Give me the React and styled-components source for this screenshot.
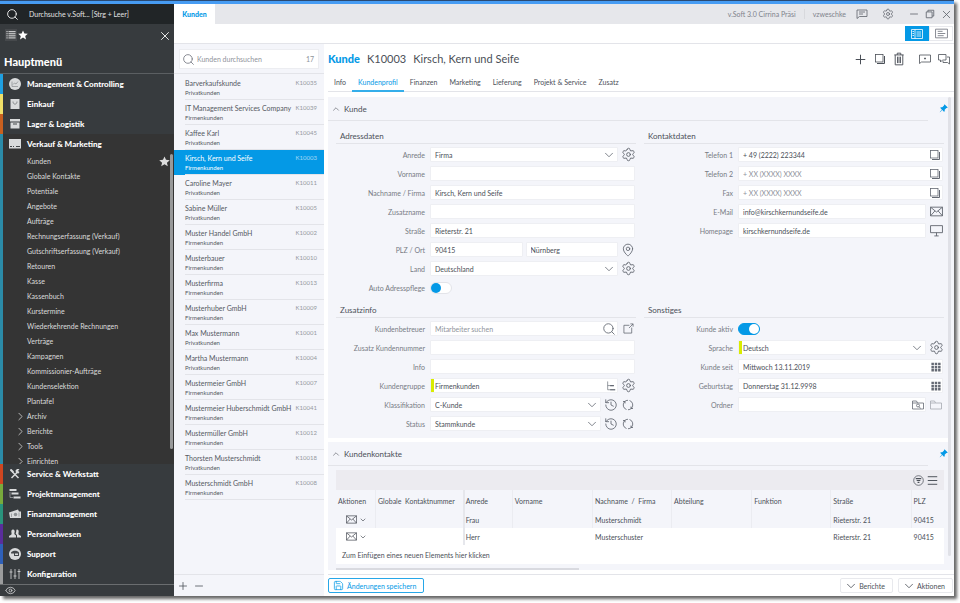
import { useState } from 'react';
import styled, { createGlobalStyle } from 'styled-components';
import {
  Search,
  X,
  ChevronRight,
  ChevronDown,
  ChevronUp,
  Eye,
  Plus,
  Minus,
  Settings,
  MapPin,
  History,
  Menu,
  Save,
} from 'lucide-react';
import { BsPinAngleFill } from 'react-icons/bs';

const blue = '#0499e6';
const ink = '#4b5058';
const muted = '#777b84';
const panel = '#f4f5fa';
const line = '#e3e4e9';

const GlobalStyle = createGlobalStyle`
  * {
    box-sizing: border-box;
  }
  html, body, #root {
    height: 100%;
    margin: 0;
  }
  body {
    background: white;
    color: ${ink};
    font-family: Lato, 'Open Sans', sans-serif;
    font-size: 7px;
    line-height: 10px;
    overflow: hidden;
  }
  button, input, select {
    font: inherit;
    color: inherit;
    margin: 0;
    padding: 0;
    border: 0;
    border-radius: 0;
    background: transparent;
  }
  button {
    cursor: pointer;
  }
  h1, h2, h3, ul {
    margin: 0;
    padding: 0;
    font-weight: 400;
    list-style: none;
  }
  a {
    color: inherit;
    text-decoration: none;
  }
  svg {
    display: block;
    flex: none;
  }
`;

/* ---------- icons ---------- */

const Line = ({ size = 12, children }) => (
  <svg
    width={size}
    height={size}
    viewBox="0 0 24 24"
    fill="none"
    stroke="currentColor"
    strokeWidth="1.6">
    {children}
  </svg>
);

const Solid = ({ size = 12, children }) => (
  <svg width={size} height={size} viewBox="0 0 24 24" fill="currentColor">
    {children}
  </svg>
);

const StarIcon = ({ size = 10 }) => (
  <Solid size={size}>
    <path d="M12 1l3.3 7.4 8.2.8-6.2 5.3 1.9 8L12 18.2 4.8 22.5l1.9-8L.5 9.200l8.200-.8z" />
  </Solid>
);
const ListIcon = () => (
  <Line size={10}>
    <path d="M1 4h3M6 4h17M1 9h3M6 9h17M1 14h3M6 14h17M1 19h3M6 19h17" strokeWidth="2" />
  </Line>
);
const CopyIcon = ({ size }) => (
  <Line size={size}>
    <rect x="3" y="3" width="15" height="15" />
    <path d="M21 6v15H6" strokeWidth="2" />
  </Line>
);
const TrashIcon = () => (
  <Line size={14}>
    <path d="M4 5h16M9 5V2h6v3M5.500 5v17h13V5M9.500 8v11M12 8v11M14.500 8v11" />
  </Line>
);
const NoteIcon = () => (
  <Line>
    <path d="M1 21V4h22v14H5z" />
    <path d="M10 11h4M12 9v4" />
  </Line>
);
const TalkIcon = () => (
  <Line>
    <path d="M5 14H1V3h15v11H9l-4 4z" />
    <path d="M18 8h5v14l-4-3h-9v-3" />
  </Line>
);
const FeedbackIcon = () => (
  <Line>
    <path d="M2 21V4h20v13H7zM6 8h12M6 12h8" />
  </Line>
);
const SplitViewIcon = () => (
  <Line>
    <path d="M1 3h22v18H1zM8 3v18M3 7h3M3 11h3M3 15h3M11 8h9M11 12h9M11 16h9" />
  </Line>
);
const TextViewIcon = () => (
  <Line size={13}>
    <path d="M1 4h22v16H1zM5 8h9M5 12h14M5 16h11" />
  </Line>
);
const RestoreIcon = () => (
  <Line size={10}>
    <path d="M3 7h14v14H3zM7 7V3h14v14h-4" strokeWidth="2" />
  </Line>
);
const MailIcon = ({ size = 13 }) => (
  <Line size={size}>
    <path d="M1 4h22v16H1zM1 4l11 9 11-9M1 20l8-9M23 20l-8-9" />
  </Line>
);
const ScreenIcon = () => (
  <Line size={13}>
    <path d="M1 3h22v13H1zM12 16v6M8 22h8" />
  </Line>
);
const PopOutIcon = () => (
  <Line size={11}>
    <path d="M14 5H2v17h17V10M13 11l9-9M16 2h6v6" />
  </Line>
);
const TreeIcon = () => (
  <Line size={10}>
    <path d="M4 1v20h18M4 11h14" />
    <path d="M10 11h9M10 21h12" strokeWidth="2.600" />
  </Line>
);
const CycleIcon = () => (
  <Line>
    <path d="M9 21A9.500 9.500 0 0 1 5 5.500M15 3a9.500 9.500 0 0 1 4 15.500M2 5h4v4M22 19h-4v-4M5 5.500A9.500 9.500 0 0 1 12 2.500M19 18.500a9.500 9.500 0 0 1-7 3" />
  </Line>
);
const GridIcon = () => (
  <Solid size={10}>
    <path d="M1 2h6v6H1zM9 2h6v6H9zM17 2h6v6h-6zM1 9.500h6v6H1zM9 9.500h6v6H9zM17 9.500h6v6h-6zM1 17h6v6H1zM9 17h6v6H9zM17 17h6v6h-6z" />
  </Solid>
);
const FolderIcon = () => (
  <Line>
    <path d="M1 20V4h8l2 4h12v12zM1 8h10" />
  </Line>
);
const FolderSearchIcon = () => (
  <Line>
    <path d="M1 20V4h8l2 4h12v12zM1 8h10" />
    <circle cx="12" cy="13" r="3" />
    <path d="M14 15l3 4" />
  </Line>
);
const FilterIcon = () => (
  <Line size={11}>
    <circle cx="12" cy="12" r="10.500" />
    <path d="M6 8h12M8 12h8M10 16h4" strokeWidth="2.400" />
  </Line>
);

const menuIcons = {
  chart: (
    <Solid>
      <path d="M12 0a12 12 0 1 1 0 24 12 12 0 0 1 0-24z" />
      <path d="M6 7v10h12M8 13l3-3 3 2 4-5" fill="none" stroke="#8c9093" strokeWidth="1.500" />
    </Solid>
  ),
  bag: (
    <Solid>
      <path d="M3 2h18v20H3z" />
      <path d="M8 7c0 7 8 7 8 0" fill="none" stroke="#6b6f72" strokeWidth="1.500" />
    </Solid>
  ),
  box: (
    <Solid>
      <path d="M2 2h20v5H2zM3 9h18v12H3z" />
      <path d="M8 12h8" stroke="#44484b" strokeWidth="2" />
    </Solid>
  ),
  card: (
    <Solid>
      <path d="M0 2h24v19H0z" />
      <path d="M2 17h4M8 17h2M14 17h8" stroke="#44484b" strokeWidth="2" />
    </Solid>
  ),
  tools: (
    <Solid>
      <path d="M5 20L18 7M19 20L7 8" fill="none" stroke="currentColor" strokeWidth="3" />
      <path d="M2 3l3-1 5 5-3 3-5-5zM16 2l5 0-3 4 3 2-2 3-5-1-1-5z" />
    </Solid>
  ),
  gantt: (
    <Solid>
      <path d="M1 2h14v4H1zM5 9h14v4H5zM9 17h14v4H9z" />
      <path d="M2 8v11h6" fill="none" stroke="currentColor" strokeWidth="1" />
    </Solid>
  ),
  money: (
    <Solid>
      <path d="M0 9l18-6 2 4h4v13H2z" />
      <circle cx="13" cy="13" r="3.500" fill="#8c9093" />
      <path d="M5 11v7M20 9v8" stroke="#8c9093" strokeWidth="1.500" />
    </Solid>
  ),
  people: (
    <Solid>
      <path d="M8 3c3 0 4 3 3 6-1 3 0 4 3 6v4H0v-3c4-2 6-3 5-6-1-4 0-7 3-7z" />
      <path d="M16 3c3 0 4 3 3 7-1 3 1 4 5 6v3h-8v-5c-3-2-3-3-2-5 1-3 0-6 2-6z" />
    </Solid>
  ),
  support: (
    <Solid>
      <path d="M12 0a12 12 0 1 1 0 24 12 12 0 0 1 0-24z" />
      <path d="M4 9c3-5 13-5 16 0v7H10v-5H4z" fill="#44484b" />
      <path d="M12 11h6v3h-6z" />
    </Solid>
  ),
  sliders: (
    <Line>
      <path d="M4 2v20M12 2v20M20 2v20M1 8h6M9 16h6M17 7h6" />
    </Line>
  ),
};

/* ---------- window frame ---------- */

const Desktop = styled.div`
  height: 100%;
  padding: 0 6px 7px 0;
`;

const Window = styled.div`
  height: 100%;
  display: flex;
  flex-direction: column;
  background: white;
  border-top: 1px solid #2a4a73;
  box-shadow: 3px 3px 3px rgba(0, 0, 0, 0.6);
`;

const Accent = styled.div`
  flex: none;
  height: 3px;
  background: #479cf3;
`;

const Columns = styled.div`
  flex: 1;
  min-height: 0;
  display: flex;
`;

/* ---------- sidebar ---------- */

const Sidebar = styled.nav`
  flex: none;
  width: 174px;
  display: flex;
  flex-direction: column;
  background: #373b3e;
  color: white;
`;

const SideSearch = styled.label`
  flex: none;
  height: 20px;
  display: flex;
  align-items: center;
  gap: 10px;
  padding-left: 6px;
  background: #212527;
  input {
    flex: 1;
    min-width: 0;
  }
  input::placeholder {
    color: #e4e4e4;
    opacity: 1;
  }
`;

const SideTools = styled.div`
  flex: none;
  height: 22px;
  display: flex;
  align-items: center;
  padding: 0 4px 0 5px;
`;

const SideTool = styled.button`
  width: 12px;
  height: 12px;
  display: grid;
  place-items: center;
  background: ${(p) => (p.$active ? '#46494c' : 'transparent')};
  margin-left: ${(p) => (p.$end ? 'auto' : '0')};
`;

const SideTitle = styled.h2`
  flex: none;
  height: 28px;
  padding: 8px 4px 0;
  font-size: 11px;
  line-height: 16px;
  font-weight: 900;
  border-bottom: 1px solid #5b5f62;
`;

const Group = styled.div`
  flex: ${(p) => (p.$open ? '1' : 'none')};
  min-height: 0;
  display: flex;
  flex-direction: column;
  border-left: 3px solid ${(p) => p.$color};
  background: ${(p) => (p.$open ? '#343434' : 'transparent')};
`;

const GroupHead = styled.button`
  flex: none;
  height: 20px;
  display: flex;
  align-items: center;
  gap: 6px;
  padding-left: 6px;
  font-size: 8px;
  font-weight: 900;
  text-align: left;
  svg {
    color: #d9dbdc;
  }
`;

const SubArea = styled.div`
  flex: 1;
  min-height: 0;
  display: flex;
`;

const SubList = styled.ul`
  flex: 1;
  overflow: hidden;
`;

const SubItem = styled.li`
  height: 15px;
  display: flex;
  align-items: center;
  padding-bottom: 1px;
  line-height: 8px;
  color: #dcdcdc;
  a {
    flex: 1;
  }
`;

const SubLead = styled.span`
  width: 24px;
  padding-left: 11px;
`;

const SubScroll = styled.div`
  width: 3px;
  height: 95%;
  margin-right: 1px;
  border-radius: 2px;
  background: #98999a;
`;

const SideFoot = styled.div`
  flex: none;
  height: 12px;
  display: flex;
  align-items: center;
  padding-left: 5px;
  border-top: 1px solid #6a6d6f;
  color: #cfd0d1;
`;

/* ---------- top bars ---------- */

const Workspace = styled.div`
  flex: 1;
  min-width: 0;
  display: flex;
  flex-direction: column;
`;

const TabBar = styled.div`
  flex: none;
  height: 20px;
  display: flex;
  align-items: center;
  background: #e6e7eb;
  color: #7f838b;
`;

const OpenTab = styled.button`
  align-self: stretch;
  width: 41px;
  margin-right: auto;
  background: white;
  color: ${blue};
  font-weight: 900;
`;

const BarText = styled.span`
  padding: 0 8px;
  border-left: ${(p) => (p.$divided ? '1px solid #d8d9dd' : '0')};
`;

const WindowButton = styled.button`
  width: 16px;
  display: grid;
  place-items: center;
  color: #5d626a;
  margin-left: ${(p) => (p.$apart ? '10px' : '0')};
`;

const ViewBar = styled.div`
  flex: none;
  height: 20px;
  display: flex;
  align-items: center;
  justify-content: flex-end;
  padding-right: 1px;
  border-bottom: 1px solid ${line};
`;

const ViewButton = styled.button`
  width: 24px;
  height: 15px;
  display: grid;
  place-items: center;
  border: 1px solid ${(p) => (p.$active ? blue : '#e8e9ed')};
  background: ${(p) => (p.$active ? blue : 'white')};
  color: ${(p) => (p.$active ? 'white' : muted)};
`;

const Body = styled.div`
  flex: 1;
  min-height: 0;
  display: flex;
`;

/* ---------- customer list ---------- */

const ListPanel = styled.aside`
  flex: none;
  width: 150px;
  display: flex;
  flex-direction: column;
  background: ${panel};
`;

const ListSearch = styled.label`
  flex: none;
  height: 20px;
  margin: 5px 5px 4px;
  padding: 0 4px 0 2px;
  display: flex;
  align-items: center;
  gap: 2px;
  background: white;
  border: 1px solid #ecedf1;
  color: #8f939b;
  svg {
    color: ${muted};
  }
  input {
    flex: 1;
    min-width: 0;
  }
  input::placeholder {
    color: #8f939b;
    opacity: 1;
  }
`;

const Customers = styled.ul`
  flex: 1;
  min-height: 0;
  overflow: hidden;
  padding-top: 1px;
  border-top: 1px solid ${line};
`;

const Customer = styled.li`
  padding-left: 11px;
  background: ${(p) => (p.$selected ? blue : 'transparent')};
  color: ${(p) => (p.$selected ? 'white' : '#555962')};
`;

const CustomerLink = styled.a`
  height: 25px;
  display: grid;
  grid-template-columns: 1fr auto;
  align-content: center;
  padding: 2px 7px 0 0;
  border-bottom: 1px solid ${line};
`;

const CustomerName = styled.span`
  font-size: ${(p) => (p.$small ? '6px' : '7px')};
  line-height: 9px;
  white-space: nowrap;
`;

const CustomerNo = styled.span`
  font-size: 6px;
  line-height: 8px;
  opacity: 0.6;
`;

const ListFoot = styled.div`
  flex: none;
  height: 22px;
  display: flex;
  align-items: center;
  gap: 4px;
  padding-left: 3px;
  border-top: 1px solid ${line};
`;

/* ---------- record ---------- */

const Record = styled.main`
  flex: 1;
  min-width: 0;
  display: flex;
  flex-direction: column;
  padding-left: 4px;
`;

const RecordHead = styled.header`
  flex: none;
  height: 30px;
  display: flex;
  align-items: center;
  padding-right: 1px;
`;

const RecordTitle = styled.h1`
  flex: 1;
  display: flex;
  gap: 7px;
  font-size: 11px;
  line-height: 16px;
  b {
    color: ${blue};
    font-weight: 900;
  }
`;

const HeadTool = styled.button`
  width: 19px;
  display: grid;
  place-items: center;
  margin-left: ${(p) => (p.$apart ? '7px' : '0')};
`;

const Tabs = styled.div`
  flex: none;
  height: 18px;
  display: flex;
  border-bottom: 1px solid ${line};
`;

const Tab = styled.button`
  padding: 0 6px;
  height: 18px;
  color: ${(p) => (p.$active ? blue : ink)};
  border-bottom: 2px solid ${(p) => (p.$active ? '#35aeea' : 'transparent')};
`;

const ScrollArea = styled.div`
  flex: 1;
  min-height: 0;
  display: flex;
  margin: 5px 0 4px;
`;

const Cards = styled.div`
  flex: 1;
  min-width: 0;
  display: flex;
  flex-direction: column;
  gap: 4px;
`;

const ScrollTrack = styled.div`
  flex: none;
  width: 6px;
  background: ${panel};
`;

const ScrollThumb = styled.div`
  width: 3px;
  height: 97%;
  border-radius: 2px;
  background: #e0e1e7;
`;

const Card = styled.section`
  flex: ${(p) => (p.$grow ? '1' : 'none')};
  background: ${panel};
  padding-bottom: ${(p) => (p.$grow ? '0' : '5px')};
`;

const CardHead = styled.header`
  height: 24px;
  display: flex;
  justify-content: space-between;
  color: ${blue};
`;

const CardTitle = styled.button`
  flex: 1;
  display: flex;
  align-items: center;
  gap: 3px;
  padding-left: 3px;
  margin-right: 11px;
  font-size: 8px;
  color: ${ink};
  border-bottom: 1px solid ${line};
`;

const PinButton = styled.button`
  align-self: flex-start;
  padding-top: 7px;
`;

const Forms = styled.div`
  display: grid;
  grid-template-columns: 1fr 1fr;
  column-gap: 8px;
  row-gap: 6px;
  padding: 8px 4px 0 8px;
`;

const FormTitle = styled.h3`
  height: 15px;
  padding-left: 4px;
  margin-bottom: 1px;
  font-size: 8px;
  line-height: 14px;
  border-bottom: 1px solid ${line};
`;

const FieldRow = styled.div`
  height: 19px;
  display: flex;
  align-items: center;
  gap: 3px;
  padding-right: 1px;
`;

const FieldLabel = styled.label`
  flex: none;
  width: 91px;
  padding-right: 2px;
  text-align: right;
  color: ${muted};
`;

const Box = styled.div`
  flex: 1;
  min-width: 0;
  height: 15px;
  display: flex;
  align-items: center;
  padding-right: 1px;
  background: white;
  border: 1px solid #eeeff3;
  border-radius: 1px;
  svg {
    color: #646973;
  }
  input,
  select {
    flex: 1;
    width: 0;
    height: 100%;
    padding: 0 4px;
    appearance: none;
    outline: none;
    border-left: ${(p) => (p.$required ? '3px solid #d9ec00' : '0')};
    padding-left: ${(p) => (p.$required ? '1px' : '4px')};
  }
  input::placeholder {
    color: #8f939b;
    opacity: 1;
  }
`;

const SideButton = styled.button`
  flex: none;
  width: 14px;
  display: grid;
  place-items: center;
  color: #5b6069;
  opacity: ${(p) => (p.$dim ? '0.5' : '1')};
`;

const Switch = styled.input`
  && {
    appearance: none;
    width: 22px;
    height: 12px;
    border-radius: 6px;
    background: ${(p) => (p.checked ? blue : 'white')};
    border: 1px solid ${(p) => (p.checked ? blue : line)};
    display: flex;
    align-items: center;
    justify-content: ${(p) => (p.checked ? 'flex-end' : 'flex-start')};
  }
  &::before {
    content: '';
    width: 10px;
    height: 10px;
    border-radius: 50%;
    background: ${(p) => (p.checked ? 'white' : blue)};
  }
`;

/* ---------- contacts ---------- */

const Contacts = styled.div`
  padding: 4px 4px 0 8px;
`;

const GridBar = styled.div`
  height: 20px;
  display: flex;
  align-items: center;
  justify-content: flex-end;
  gap: 2px;
  padding-right: 5px;
  background: #ecebf0;
`;

const Table = styled.table`
  width: 100%;
  table-layout: fixed;
  border-collapse: collapse;
  th,
  td {
    padding: 0 0 0 2px;
    font-weight: 400;
    text-align: left;
    white-space: pre;
    border-left: 1px solid #ebecf1;
  }
  th {
    height: 21px;
  }
  td {
    height: 17px;
  }
  th:first-child,
  td:first-child {
    border-left: 0;
  }
  th:nth-child(3),
  td:nth-child(3) {
    border-left: 2px solid #e6e7ec;
    padding-left: 1px;
  }
  tbody tr:nth-child(even) {
    background: white;
  }
  tbody tr:nth-child(even) td {
    border-left-color: white;
  }
  tbody tr:nth-child(even) td:nth-child(3) {
    border-left-color: #e6e7ec;
  }
`;

const Col = styled.col`
  width: ${(p) => p.$w}%;
`;

const RowActions = styled.button`
  display: flex;
  align-items: center;
  gap: 2px;
  margin-left: 8px;
`;

const NewRow = styled.button`
  display: block;
  width: 100%;
  height: 19px;
  padding-left: 6px;
  text-align: left;
  background: white;
`;

const HScroll = styled.div`
  width: 40%;
  height: 2px;
  margin-top: 4px;
  background: #d9dae0;
`;

const RecordFoot = styled.footer`
  flex: none;
  height: 22px;
  display: flex;
  align-items: center;
  gap: 5px;
  padding-right: 1px;
  border-top: 1px solid ${line};
`;

const FootButton = styled.button`
  height: 15px;
  display: flex;
  align-items: center;
  gap: ${(p) => (p.$primary ? '3px' : '1px')};
  padding: 0 7px 0 ${(p) => (p.$primary ? '4px' : '3px')};
  border: 1px solid ${(p) => (p.$primary ? '#27a7e8' : '#e8e9ed')};
  border-radius: 2px;
  color: ${(p) => (p.$primary ? blue : ink)};
  margin-right: ${(p) => (p.$primary ? 'auto' : '0')};
`;

/* ---------- data ---------- */

const groupsTop = [
  ['Management & Controlling', '#1f9fe0', 'chart'],
  ['Einkauf', '#f0e068', 'bag'],
  ['Lager & Logistik', '#c8601f', 'box'],
];

const groupsBottom = [
  ['Service & Werkstatt', '#cf4620', 'tools'],
  ['Projektmanagement', '#78aa3c', 'gantt'],
  ['Finanzmanagement', '#2a937c', 'money'],
  ['Personalwesen', '#5a2d9b', 'people'],
  ['Support', '#2f60b8', 'support'],
  ['Konfiguration', '#9b9c9d', 'sliders'],
];

const subItems = [
  'Kunden',
  'Globale Kontakte',
  'Potentiale',
  'Angebote',
  'Aufträge',
  'Rechnungserfassung (Verkauf)',
  'Gutschriftserfassung (Verkauf)',
  'Retouren',
  'Kasse',
  'Kassenbuch',
  'Kurstermine',
  'Wiederkehrende Rechnungen',
  'Verträge',
  'Kampagnen',
  'Kommissionier-Aufträge',
  'Kundenselektion',
  'Plantafel',
];

const subFolders = ['Archiv', 'Berichte', 'Tools', 'Einrichten'];

const customers = [
  ['Barverkaufskunde', 'Privatkunden', 'K10035'],
  ['IT Management Services Company', 'Firmenkunden', 'K10039'],
  ['Kaffee Karl', 'Privatkunden', 'K10045'],
  ['Kirsch, Kern und Seife', 'Firmenkunden', 'K10003'],
  ['Caroline Mayer', 'Privatkunden', 'K10011'],
  ['Sabine Müller', 'Privatkunden', 'K10005'],
  ['Muster Handel GmbH', 'Firmenkunden', 'K10002'],
  ['Musterbauer', 'Firmenkunden', 'K10010'],
  ['Musterfirma', 'Firmenkunden', 'K10013'],
  ['Musterhuber GmbH', 'Firmenkunden', 'K10009'],
  ['Max Mustermann', 'Privatkunden', 'K10001'],
  ['Martha Mustermann', 'Privatkunden', 'K10004'],
  ['Mustermeier GmbH', 'Firmenkunden', 'K10007'],
  ['Mustermeier Huberschmidt GmbH', 'Firmenkunden', 'K10041'],
  ['Mustermüller GmbH', 'Firmenkunden', 'K10012'],
  ['Thorsten Musterschmidt', 'Privatkunden', 'K10018'],
  ['Musterschmidt GmbH', 'Firmenkunden', 'K10008'],
];

const tabs = [
  'Info',
  'Kundenprofil',
  'Finanzen',
  'Marketing',
  'Lieferung',
  'Projekt & Service',
  'Zusatz',
];

const columns = [
  ['Aktionen', 6.5],
  ['Globale  Kontaktnummer', 14.5],
  ['Anrede', 8],
  ['Vorname', 13.2],
  ['Nachname  /  Firma', 13],
  ['Abteilung', 13.2],
  ['Funktion', 13],
  ['Straße', 13.2],
  ['PLZ', 5.4],
];

const contacts = [
  ['', 'Frau', '', 'Musterschmidt', '', '', 'Rieterstr. 21', '90415'],
  ['', 'Herr', '', 'Musterschuster', '', '', 'Rieterstr. 21', '90415'],
];

/* ---------- parts ---------- */

const gear = <Settings size={15} strokeWidth={1.4} />;
const down = <ChevronDown size={14} strokeWidth={1.4} />;

const Field = ({ id, label, value = '', placeholder, inner, required, children }) => (
  <FieldRow>
    <FieldLabel htmlFor={id}>{label}</FieldLabel>
    <Box $required={required}>
      <input id={id} defaultValue={value} placeholder={placeholder} />
      {inner}
    </Box>
    {children}
  </FieldRow>
);

const SelectField = ({ id, label, value, required, children }) => (
  <FieldRow>
    <FieldLabel htmlFor={id}>{label}</FieldLabel>
    <Box $required={required}>
      <select id={id} defaultValue={value}>
        <option>{value}</option>
      </select>
      {down}
    </Box>
    {children}
  </FieldRow>
);

const SwitchField = ({ id, label, on }) => {
  const [checked, setChecked] = useState(on);
  return (
    <FieldRow>
      <FieldLabel htmlFor={id}>{label}</FieldLabel>
      <Switch
        id={id}
        type="checkbox"
        checked={checked}
        onChange={() => setChecked(!checked)}
      />
    </FieldRow>
  );
};

const MenuGroup = ({ name, color, icon, open, children }) => (
  <Group $color={color} $open={open}>
    <GroupHead>
      {menuIcons[icon]}
      {name}
    </GroupHead>
    {children}
  </Group>
);

const SectionCard = ({ title, grow, children }) => (
  <Card $grow={grow}>
    <CardHead>
      <CardTitle>
        <ChevronUp size={10} strokeWidth={1.4} />
        {title}
      </CardTitle>
      <PinButton aria-label="Anheften">
        <BsPinAngleFill size={9} />
      </PinButton>
    </CardHead>
    {children}
  </Card>
);

const SideMenu = () => (
  <Sidebar>
    <SideSearch>
      <Search size={13} strokeWidth={1.6} />
      <input placeholder="Durchsuche v.Soft... [Strg + Leer]" />
    </SideSearch>
    <SideTools>
      <SideTool $active aria-label="Menü">
        <ListIcon />
      </SideTool>
      <SideTool aria-label="Favoriten">
        <StarIcon />
      </SideTool>
      <SideTool $end aria-label="Schließen">
        <X size={14} strokeWidth={1.5} />
      </SideTool>
    </SideTools>
    <SideTitle>Hauptmenü</SideTitle>
    {groupsTop.map(([name, color, icon]) => (
      <MenuGroup key={name} name={name} color={color} icon={icon} />
    ))}
    <MenuGroup name="Verkauf & Marketing" color="#2b8ba8" icon="card" open>
      <SubArea>
        <SubList>
          {subItems.map((item) => (
            <SubItem key={item}>
              <SubLead />
              <a href="#menu">{item}</a>
              {item === 'Kunden' && <StarIcon size={11} />}
            </SubItem>
          ))}
          {subFolders.map((item) => (
            <SubItem key={item}>
              <SubLead>
                <ChevronRight size={13} strokeWidth={1.4} />
              </SubLead>
              <a href="#menu">{item}</a>
            </SubItem>
          ))}
        </SubList>
        <SubScroll />
      </SubArea>
    </MenuGroup>
    {groupsBottom.map(([name, color, icon]) => (
      <MenuGroup key={name} name={name} color={color} icon={icon} />
    ))}
    <SideFoot>
      <Eye size={11} strokeWidth={1.8} />
    </SideFoot>
  </Sidebar>
);

const CustomerList = () => (
  <ListPanel>
    <ListSearch>
      <Search size={13} strokeWidth={1.6} />
      <input placeholder="Kunden durchsuchen" />
      <span>17</span>
    </ListSearch>
    <Customers>
      {customers.map(([name, kind, no]) => (
        <Customer key={no} $selected={no === 'K10003'}>
          <CustomerLink href="#kunde">
            <CustomerName>{name}</CustomerName>
            <CustomerNo>{no}</CustomerNo>
            <CustomerName $small>{kind}</CustomerName>
          </CustomerLink>
        </Customer>
      ))}
    </Customers>
    <ListFoot>
      <button aria-label="Neu">
        <Plus size={12} strokeWidth={1.6} />
      </button>
      <button aria-label="Entfernen">
        <Minus size={12} strokeWidth={1.6} />
      </button>
    </ListFoot>
  </ListPanel>
);

const Profile = () => (
  <Forms>
    <div>
      <FormTitle>Adressdaten</FormTitle>
      <SelectField id="anrede" label="Anrede" value="Firma">
        <SideButton aria-label="Anrede bearbeiten">{gear}</SideButton>
      </SelectField>
      <Field id="vorname" label="Vorname" />
      <Field id="name" label="Nachname / Firma" value="Kirsch, Kern und Seife" />
      <Field id="zusatzname" label="Zusatzname" />
      <Field id="strasse" label="Straße" value="Rieterstr. 21" />
      <FieldRow>
        <FieldLabel htmlFor="plz">PLZ / Ort</FieldLabel>
        <Box>
          <input id="plz" defaultValue="90415" />
        </Box>
        <Box>
          <input aria-label="Ort" defaultValue="Nürnberg" />
        </Box>
        <SideButton aria-label="Karte">
          <MapPin size={14} strokeWidth={1.4} />
        </SideButton>
      </FieldRow>
      <SelectField id="land" label="Land" value="Deutschland">
        <SideButton aria-label="Länder bearbeiten">{gear}</SideButton>
      </SelectField>
      <SwitchField id="auto" label="Auto Adresspflege" on={false} />
    </div>
    <div>
      <FormTitle>Kontaktdaten</FormTitle>
      <Field id="tel1" label="Telefon 1" value="+ 49 (2222) 223344" inner={<CopyIcon />} />
      <Field id="tel2" label="Telefon 2" placeholder="+ XX (XXXX) XXXX" inner={<CopyIcon />} />
      <Field id="fax" label="Fax" placeholder="+ XX (XXXX) XXXX" inner={<CopyIcon />} />
      <Field id="mail" label="E-Mail" value="info@kirschkernundseife.de">
        <SideButton aria-label="E-Mail senden">
          <MailIcon />
        </SideButton>
      </Field>
      <Field id="web" label="Homepage" value="kirschkernundseife.de">
        <SideButton aria-label="Homepage öffnen">
          <ScreenIcon />
        </SideButton>
      </Field>
    </div>
    <div>
      <FormTitle>Zusatzinfo</FormTitle>
      <Field
        id="betreuer"
        label="Kundenbetreuer"
        placeholder="Mitarbeiter suchen"
        inner={<Search size={14} strokeWidth={1.5} />}>
        <SideButton aria-label="Mitarbeiter öffnen">
          <PopOutIcon />
        </SideButton>
      </Field>
      <Field id="zusatznr" label="Zusatz Kundennummer" />
      <Field id="info" label="Info" />
      <Field
        id="gruppe"
        label="Kundengruppe"
        value="Firmenkunden"
        required
        inner={<TreeIcon />}>
        <SideButton aria-label="Kundengruppen bearbeiten">{gear}</SideButton>
      </Field>
      {[
        ['klasse', 'Klassifikation', 'C-Kunde'],
        ['status', 'Status', 'Stammkunde'],
      ].map(([id, label, value]) => (
        <SelectField key={id} id={id} label={label} value={value}>
          <SideButton aria-label="Verlauf">
            <History size={14} strokeWidth={1.4} />
          </SideButton>
          <SideButton aria-label="Aktualisieren">
            <CycleIcon />
          </SideButton>
        </SelectField>
      ))}
    </div>
    <div>
      <FormTitle>Sonstiges</FormTitle>
      <SwitchField id="aktiv" label="Kunde aktiv" on />
      <SelectField id="sprache" label="Sprache" value="Deutsch" required>
        <SideButton aria-label="Sprachen bearbeiten">{gear}</SideButton>
      </SelectField>
      <Field id="seit" label="Kunde seit" value="Mittwoch 13.11.2019" inner={<GridIcon />} />
      <Field id="geb" label="Geburtstag" value="Donnerstag 31.12.9998" inner={<GridIcon />} />
      <Field id="ordner" label="Ordner" inner={<FolderSearchIcon />}>
        <SideButton $dim aria-label="Ordner öffnen">
          <FolderIcon />
        </SideButton>
      </Field>
    </div>
  </Forms>
);

const ContactTable = () => (
  <Contacts>
    <GridBar>
      <button aria-label="Filter">
        <FilterIcon />
      </button>
      <button aria-label="Menü">
        <Menu size={13} strokeWidth={1.8} />
      </button>
    </GridBar>
    <Table>
      <colgroup>
        {columns.map(([name, w]) => (
          <Col key={name} $w={w} />
        ))}
      </colgroup>
      <thead>
        <tr>
          {columns.map(([name]) => (
            <th key={name}>{name}</th>
          ))}
        </tr>
      </thead>
      <tbody>
        {contacts.map((row) => (
          <tr key={row[3]}>
            <td>
              <RowActions aria-label="Aktionen">
                <MailIcon size={11} />
                <ChevronDown size={8} strokeWidth={2} />
              </RowActions>
            </td>
            {row.map((cell, i) => (
              <td key={i}>{cell}</td>
            ))}
          </tr>
        ))}
      </tbody>
    </Table>
    <NewRow>Zum Einfügen eines neuen Elements hier klicken</NewRow>
    <HScroll />
  </Contacts>
);

const App = () => {
  const [tab, setTab] = useState('Kundenprofil');

  return (
    <Desktop>
      <GlobalStyle />
      <Window>
        <Accent />
        <Columns>
          <SideMenu />
          <Workspace>
            <TabBar>
              <OpenTab>Kunden</OpenTab>
              <BarText>v.Soft 3.0 Cirrina Präsi</BarText>
              <BarText $divided>vzweschke</BarText>
              <WindowButton aria-label="Feedback">
                <FeedbackIcon />
              </WindowButton>
              <WindowButton $apart aria-label="Einstellungen">
                <Settings size={12} strokeWidth={1.5} />
              </WindowButton>
              <WindowButton $apart aria-label="Minimieren">
                <Minus size={12} strokeWidth={1.6} />
              </WindowButton>
              <WindowButton aria-label="Wiederherstellen">
                <RestoreIcon />
              </WindowButton>
              <WindowButton aria-label="Fenster schließen">
                <X size={13} strokeWidth={1.5} />
              </WindowButton>
            </TabBar>
            <ViewBar>
              <ViewButton $active aria-label="Geteilte Ansicht">
                <SplitViewIcon />
              </ViewButton>
              <ViewButton aria-label="Einzelansicht">
                <TextViewIcon />
              </ViewButton>
            </ViewBar>
            <Body>
              <CustomerList />
              <Record>
                <RecordHead>
                  <RecordTitle>
                    <b>Kunde</b>
                    <span>K10003</span>
                    <span>Kirsch, Kern und Seife</span>
                  </RecordTitle>
                  <HeadTool aria-label="Neu">
                    <Plus size={15} strokeWidth={1.6} />
                  </HeadTool>
                  <HeadTool aria-label="Kopieren">
                    <CopyIcon />
                  </HeadTool>
                  <HeadTool aria-label="Löschen">
                    <TrashIcon />
                  </HeadTool>
                  <HeadTool $apart aria-label="Notiz">
                    <NoteIcon />
                  </HeadTool>
                  <HeadTool aria-label="Chat">
                    <TalkIcon />
                  </HeadTool>
                </RecordHead>
                <Tabs>
                  {tabs.map((name) => (
                    <Tab key={name} $active={name === tab} onClick={() => setTab(name)}>
                      {name}
                    </Tab>
                  ))}
                </Tabs>
                <ScrollArea>
                  <Cards>
                    <SectionCard title="Kunde">
                      <Profile />
                    </SectionCard>
                    <SectionCard title="Kundenkontakte" grow>
                      <ContactTable />
                    </SectionCard>
                  </Cards>
                  <ScrollTrack>
                    <ScrollThumb />
                  </ScrollTrack>
                </ScrollArea>
                <RecordFoot>
                  <FootButton $primary>
                    <Save size={11} strokeWidth={1.6} />
                    Änderungen speichern
                  </FootButton>
                  <FootButton>
                    {down}
                    Berichte
                  </FootButton>
                  <FootButton>
                    {down}
                    Aktionen
                  </FootButton>
                </RecordFoot>
              </Record>
            </Body>
          </Workspace>
        </Columns>
      </Window>
    </Desktop>
  );
};

export default App;
